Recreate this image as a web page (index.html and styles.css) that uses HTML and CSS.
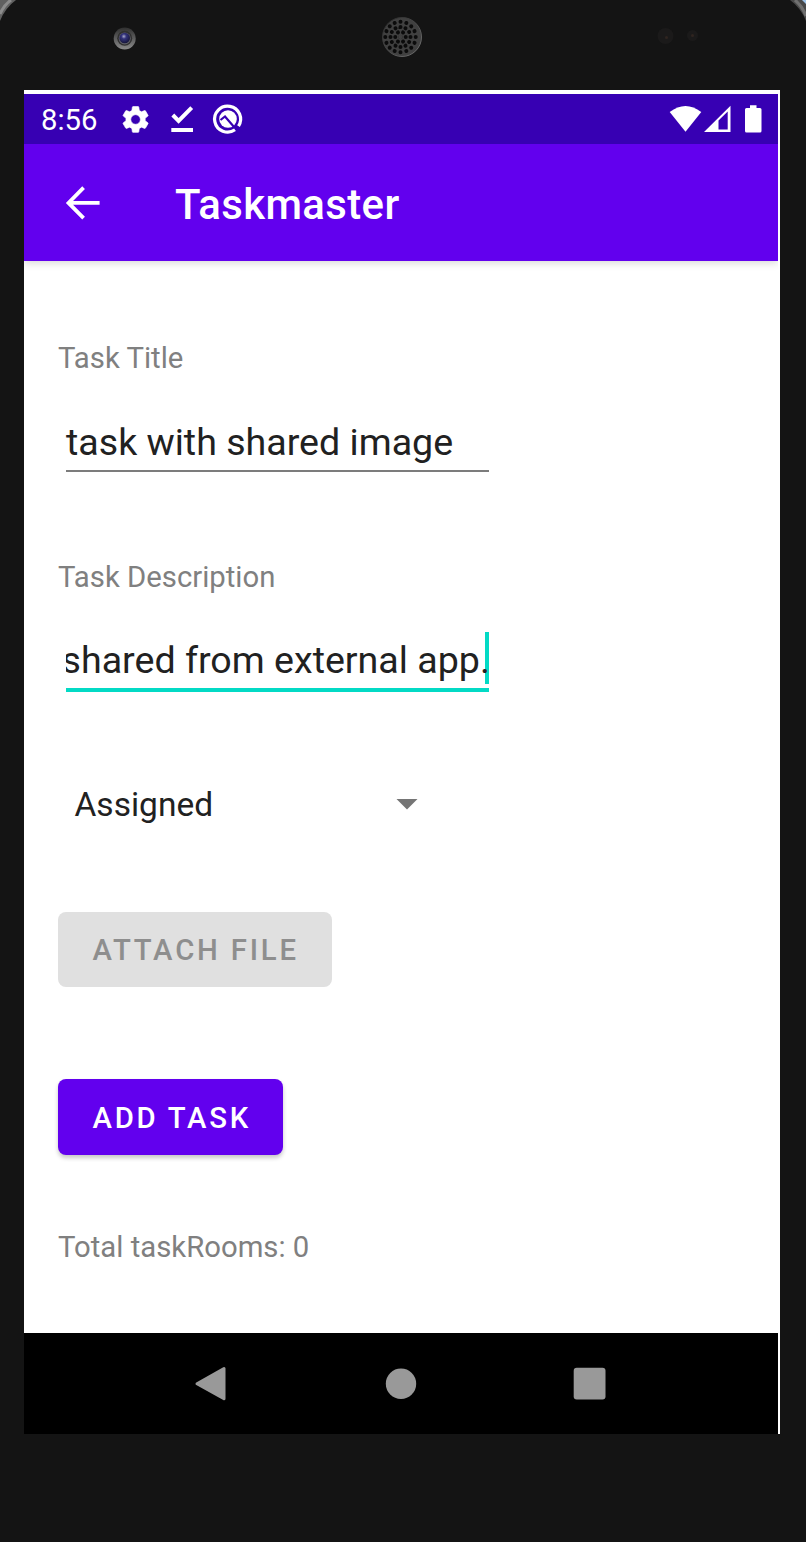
FILE: index.html
```html
<!DOCTYPE html>
<html lang="en">
<head>
<meta charset="utf-8">
<title>Taskmaster</title>
<link rel="stylesheet" href="styles.css">
</head>
<body>
<div class="device">
  <svg class="bezel" width="806" height="90" viewBox="0 0 806 90" aria-hidden="true">
    <defs>
      <linearGradient id="rim" x1="0" y1="0" x2="0" y2="1"><stop offset="0" stop-color="#303030"/><stop offset="1" stop-color="#8a8a8a"/></linearGradient>
      <radialGradient id="lens" cx=".42" cy=".35" r=".65"><stop offset="0" stop-color="#aaaac8"/><stop offset=".35" stop-color="#34347c"/><stop offset="1" stop-color="#15153a"/></radialGradient>
      <linearGradient id="spk" x1="0" y1="0" x2="1" y2="1"><stop offset="0" stop-color="#222"/><stop offset="1" stop-color="#777"/></linearGradient>
    </defs>
    <path d="M0 0H16Q5 8 0 21Z" fill="#606060"/>
    <path d="M0 14Q4 5 11 0" fill="none" stroke="#8c8c8c" stroke-width="3"/>
    <path d="M790 0H806V21Q801 8 790 0Z" fill="#484848"/>
    <path d="M795 0Q803 7 806 16" fill="none" stroke="#707070" stroke-width="3"/>
    <path d="M802 0H806V4Z" fill="#9ec4ea"/>
    <circle cx="124.700" cy="38.500" r="11" fill="url(#rim)"/>
    <circle cx="124.700" cy="38.200" r="7.500" fill="#303030"/>
    <circle cx="124.700" cy="38.500" r="6" fill="#606068"/>
    <circle cx="124.700" cy="38" r="5.300" fill="url(#lens)"/>
    <circle cx="402" cy="37" r="19.500" fill="#404040" stroke="url(#spk)"/>
    <g fill="none" stroke="#0b0b0b" stroke-width="4" stroke-linecap="round">
      <circle cx="400.500" cy="37" r=".1"/>
      <circle cx="400.500" cy="37" r="5.200" pathLength="60" stroke-dasharray=".01 9.990"/>
      <circle cx="400.500" cy="37" r="10" pathLength="120" stroke-dasharray=".01 9.990"/>
      <circle cx="400.500" cy="37" r="15.200" pathLength="160" stroke-dasharray=".01 9.990"/>
    </g>
    <circle cx="665.500" cy="36" r="8" fill="#1b1a1a"/><circle cx="666.500" cy="37.500" r="1.500" fill="#302520"/>
    <circle cx="692.500" cy="35.500" r="5.500" fill="#1b1a1a"/><circle cx="692.500" cy="35.500" r="1.500" fill="#302520"/>
  </svg>

  <main class="screen">
    <header class="status">
      <span class="clock">8:56</span>
      <svg class="notices" width="130" height="50" viewBox="118 94 130 50" fill="#fff" aria-hidden="true">
        <path transform="translate(119.500 103.400) scale(1.34)" stroke="#fff" stroke-width=".5" d="M19.140 12.940c.04-.3.060-.61.060-.94 0-.32-.02-.64-.07-.94l2.030-1.580a.49.49 0 0 0 .12-.61l-1.920-3.320a.488.488 0 0 0-.59-.22l-2.390.96c-.5-.38-1.030-.7-1.620-.94l-.36-2.540a.484.484 0 0 0-.48-.41h-3.840c-.24 0-.43.17-.47.41l-.36 2.540c-.59.24-1.130.57-1.620.94l-2.390-.96c-.22-.08-.47 0-.59.22L2.740 8.870c-.12.21-.08.47.12.61l2.030 1.580c-.05.3-.09.63-.09.94s.02.64.07.94l-2.030 1.580a.49.49 0 0 0-.12.61l1.920 3.320c.12.22.37.29.59.22l2.390-.96c.5.38 1.030.7 1.620.94l.36 2.540c.05.24.24.41.48.41h3.840c.24 0 .44-.17.47-.41l.36-2.540c.59-.24 1.130-.56 1.620-.94l2.390.96c.22.08.47 0 .59-.22l1.920-3.320c.12-.22.070-.47-.12-.61l-2.010-1.580zM12 15.600A3.610 3.610 0 0 1 8.400 12c0-1.980 1.620-3.600 3.600-3.600s3.600 1.620 3.600 3.600-1.620 3.600-3.600 3.600z"/>
        <path d="M172.800 115L178.600 120.900L191.700 107.700" fill="none" stroke="#fff" stroke-width="4"/>
        <path d="M171.300 128H193V132H171.300Z"/>
        <path d="M235 129.800A13 13 0 1 1 238.500 126.200" fill="none" stroke="#fff" stroke-width="3.200"/>
        <circle cx="228" cy="119" r="8.800"/>
        <path d="M220.500 120L225 116.500L234.500 127.500" fill="none" stroke="#3700b3" stroke-width="2.200"/>
      </svg>
      <svg class="signals" width="98" height="50" viewBox="666 94 98 50" fill="#fff" aria-hidden="true">
        <path d="M669.700 112Q685.500 100 701.300 112L685.500 131.700Z"/>
        <path fill-rule="evenodd" d="M704 132L730.500 105.700V132ZM718.500 120.500V129.600H727.700V111.500Z"/>
        <path d="M750 105.300H756.500V108H760Q761.500 108 761.500 109.500V131Q761.500 132.500 760 132.500H746.500Q745 132.500 745 131V109.500Q745 108 746.500 108H750Z"/>
      </svg>
    </header>

    <div class="appbar">
      <svg class="back" width="36" height="36" viewBox="64 185 36 36" fill="none" stroke="#fff" stroke-width="3.800" aria-hidden="true"><path d="M83.600 187.700L68.500 202.900L83.600 218.100M68.500 202.900H99.600"/></svg>
      <h1 class="title">Taskmaster</h1>
    </div>

    <section class="form">
      <label class="label">Task Title</label>
      <div class="field">task with shared image</div>
      <label class="label label-desc">Task Description</label>
      <div class="field focused"><span class="value">shared from external app.</span></div>
      <div class="spinner"><span>Assigned</span><svg width="22" height="11" viewBox="0 0 22 11" aria-hidden="true"><path d="M.5 0H21.500L11 10.500Z" fill="#757575"/></svg></div>
      <button class="btn attach" disabled>ATTACH FILE</button>
      <button class="btn add">ADD TASK</button>
      <p class="label total">Total taskRooms: 0</p>
    </section>

    <nav class="nav">
      <svg width="754" height="101" viewBox="24 1333 754 101" fill="#999" aria-hidden="true">
        <path d="M197 1383.700L224 1368.500V1398.800Z" stroke="#999" stroke-width="3" stroke-linejoin="round"/>
        <circle cx="401" cy="1383.700" r="15.200"/>
        <rect x="573.700" y="1367.700" width="31.800" height="31.800" rx="3"/>
      </svg>
    </nav>
  </main>
</div>
</body>
</html>
```
FILE: styles.css
```css
* { box-sizing: border-box; }
body { margin: 0; background: #141414; font-family: Roboto, sans-serif; }
.device { width: 806px; height: 1542px; overflow: hidden; background: #141414; }
.bezel { display: block; }
.screen { width: 756px; height: 1344px; margin-left: 24px; padding: 4px 2px 0 0; background: #fff; display: flex; flex-direction: column; }
.status { height: 50px; flex: none; display: flex; background: #3700b3; color: #fff; padding: 0 14px 0 17px; }
.clock { width: 77px; font-size: 29.300px; line-height: 53px; }
.signals { margin-left: auto; }
.appbar { height: 117.400px; flex: none; display: flex; background: #6200ee; color: #fff; padding: 41px 0 0 40px; box-shadow: 0 2px 8px rgba(0,0,0,.16); clip-path: inset(0 0 -14px 0); }
.title { margin: -4px 0 0 75px; font-size: 41.900px; line-height: 48px; font-weight: 500; letter-spacing: .4px; }
.form { flex: 1; display: flex; flex-direction: column; align-items: flex-start; padding: 79.600px 34px 0; }
.label { margin: 0; font-size: 29.300px; line-height: 34px; color: #808080; }
.field { width: 423px; height: 57px; margin: 40px 0 0 8px; font-size: 37.600px; line-height: 54px; color: #212121; white-space: nowrap; border-bottom: 2px solid #7c7c7c; }
.label-desc { margin-top: 88px; }
.focused { height: 60px; margin-top: 38px; line-height: 56px; border-bottom: 4px solid #03dac5; display: flex; justify-content: flex-end; overflow: hidden; background: linear-gradient(#03dac5,#03dac5) right 0 top 0 / 4px 52px no-repeat; }
.value { margin-right: -.8px; }
.spinner { width: 360px; margin: 93px 0 0 16.500px; display: flex; align-items: center; justify-content: space-between; font-size: 33.500px; line-height: 40px; color: #212121; padding-right: 17px; }
.spinner svg { margin-bottom: 1px; }
.btn { height: 75.500px; border: 0; border-radius: 8px; padding: 2px 0 0 35px; margin-left: -.5px; text-align: left; font: 500 29.300px/34px Roboto, sans-serif; letter-spacing: 2.800px; white-space: nowrap; }
.attach { width: 274.500px; height: 75px; margin-top: 87px; background: #e0e0e0; color: #8e8e8e; }
.add { width: 225.500px; margin-top: 92.500px; background: #6200ee; color: #fff; box-shadow: 0 3px 4px rgba(0,0,0,.22); letter-spacing: 2.750px; }
.total { margin-top: 75px; }
.nav { height: 101px; flex: none; background: #000; }
.nav svg { display: block; }
```
